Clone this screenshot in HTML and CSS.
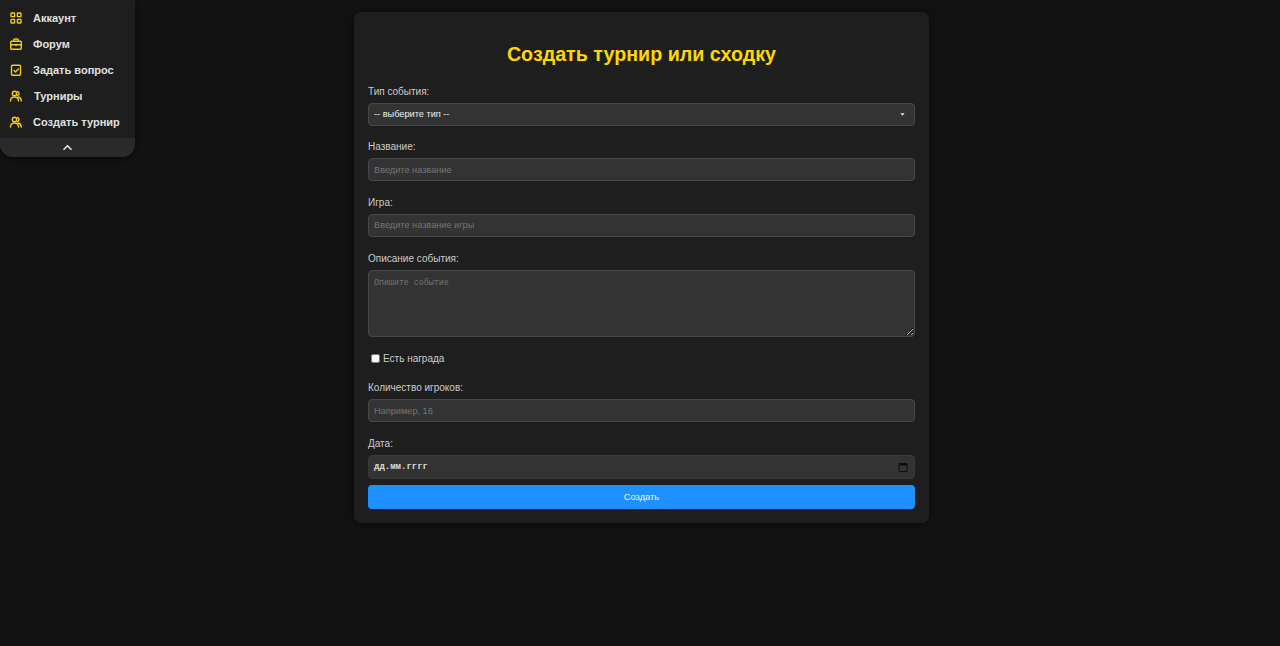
FILE: index.html
```html
<!DOCTYPE html>
<html lang="ru">
<head>
<meta charset="utf-8">
<title>Создать турнир или сходку</title>
<link rel="stylesheet" href="styles.css">
</head>
<body>
<nav class="menu">
  <ul class="menu-list">
    <li class="menu-item"><svg class="menu-icon" viewBox="0 0 14 14"><rect x="2" y="2" width="3.600" height="3.600" rx="0.400"/><rect x="8.400" y="2" width="3.600" height="3.600" rx="0.400"/><rect x="2" y="8.400" width="3.600" height="3.600" rx="0.400"/><rect x="8.400" y="8.400" width="3.600" height="3.600" rx="0.400"/></svg><a>Аккаунт</a></li>
    <li class="menu-item"><svg class="menu-icon" viewBox="0 0 14 14"><rect x="1.700" y="4.200" width="10.600" height="8" rx="1"/><path d="M4.800 4V2.800a.8.8 0 0 1 .8-.8h2.800a.8.8 0 0 1 .8.8V4M1.700 7.800h10.600M7 7.200v1.400"/></svg><a>Форум</a></li>
    <li class="menu-item"><svg class="menu-icon" viewBox="0 0 14 14"><rect x="2.500" y="2.200" width="9" height="10" rx="1"/><path d="M5 7.500l1.500 1.500 2.800-3"/></svg><a>Задать вопрос</a></li>
    <li class="menu-item"><svg class="menu-icon" viewBox="0 0 14 14"><circle cx="5.500" cy="4.500" r="2.200"/><path d="M1.500 12c0-2.500 1.500-4 4-4s4 1.500 4 4M8.500 2.500a2.200 2.200 0 0 1 0 4.200M9.500 8c1.800.5 2.800 2 2.800 4"/></svg><a class="menu-link-shifted">Турниры</a></li>
    <li class="menu-item"><svg class="menu-icon" viewBox="0 0 14 14"><circle cx="5.500" cy="4.500" r="2.200"/><path d="M1.500 12c0-2.500 1.500-4 4-4s4 1.500 4 4M8.500 2.500a2.200 2.200 0 0 1 0 4.200M9.500 8c1.800.5 2.800 2 2.800 4"/></svg><a>Создать турнир</a></li>
  </ul>
  <div class="menu-toggle"><svg class="chevron" viewBox="0 0 12 8"><path d="M2 6l4-4 4 4"/></svg></div>
</nav>

<main class="page">
  <form class="card">
    <h1 class="title">Создать турнир или сходку</h1>
    <div class="field">
      <label class="label">Тип события:</label>
      <div class="select-wrap">
        <select class="control select"><option>-- выберите тип --</option></select>
        <svg class="select-arrow" viewBox="0 0 8 5"><path d="M0.500 0.500h7L4 4.500z"/></svg>
      </div>
    </div>
    <div class="field">
      <label class="label">Название:</label>
      <input class="control" type="text" placeholder="Введите название">
    </div>
    <div class="field">
      <label class="label">Игра:</label>
      <input class="control" type="text" placeholder="Введите название игры">
    </div>
    <div class="field">
      <label class="label">Описание события:</label>
      <textarea class="control textarea" placeholder="Опишите событие"></textarea>
    </div>
    <div class="check-row">
      <input class="check" type="checkbox" id="prize">
      <label class="check-label" for="prize">Есть награда</label>
    </div>
    <div class="field">
      <label class="label">Количество игроков:</label>
      <input class="control" type="text" placeholder="Например, 16">
    </div>
    <div class="field field-date">
      <label class="label">Дата:</label>
      <div class="control date">
        <span class="date-text">дд.мм.гггг</span>
        <svg class="date-icon" viewBox="0 0 10 10"><path class="date-fill" d="M1 1h8v2.500H1z"/><rect class="date-frame" x="1" y="1.500" width="8" height="8" rx="0.500"/></svg>
      </div>
    </div>
    <button class="submit" type="button">Создать</button>
  </form>
</main>
</body>
</html>
```
FILE: styles.css
```css
* { box-sizing: border-box; }

html, body { height: 100%; }

body {
  margin: 0;
  background: #121212;
  font-family: "Liberation Sans", Arial, sans-serif;
  color: #ddd;
  overflow: hidden;
}

.menu {
  position: absolute;
  top: 0;
  left: 0;
  width: 135px;
  height: 157px;
  background: #1e1e1e;
  border-radius: 0 0 13px 13px;
  box-shadow: 0 2px 6px rgba(0, 0, 0, .5);
  display: flex;
  flex-direction: column;
  overflow: hidden;
}

.menu-list {
  list-style: none;
  margin: 0;
  padding: 5px 0 0 9px;
  flex: 1;
}

.menu-item {
  display: flex;
  align-items: center;
  gap: 10px;
  height: 26px;
  font-size: 11px;
  font-weight: 700;
  color: #e0e0e0;
}

.menu-link-shifted { margin-left: 1px; }

.menu-icon {
  width: 14px;
  height: 14px;
  fill: none;
  stroke: #f0cc14;
  stroke-width: 1.400;
  stroke-linecap: round;
  stroke-linejoin: round;
}

.menu-toggle {
  height: 19px;
  background: #2a2a2a;
  display: flex;
  align-items: center;
  justify-content: center;
}

.chevron {
  width: 11px;
  height: 7px;
  fill: none;
  stroke: #e0e0e0;
  stroke-width: 2;
  stroke-linecap: round;
  stroke-linejoin: round;
}

.page {
  display: flex;
  justify-content: center;
  padding: 12px 0 0 3px;
}

.card {
  width: 575px;
  height: 511px;
  padding: 29px 14px 0;
  background: #1e1e1e;
  border-radius: 7px;
  box-shadow: 0 0 8px rgba(0, 0, 0, .5);
}

.title {
  margin: 0 0 16.800px;
  text-align: center;
  font-size: 19.700px;
  line-height: 27px;
  font-weight: 700;
  color: #ffd700;
}

.field { margin-bottom: 14.600px; }

.field-date { margin-bottom: 6px; }

.label {
  display: block;
  padding-top: 1px;
  margin-bottom: 5px;
  font-size: 10px;
  line-height: 12px;
  color: #ccc;
}

.control {
  display: block;
  width: 100%;
  height: 23px;
  padding: 0 5px;
  background: #333;
  border: 1px solid #484848;
  border-radius: 4px;
  color: #eee;
  font-family: "Liberation Sans", Arial, sans-serif;
  font-size: 9.200px;
  outline: none;
}

.control::placeholder { color: #757575; opacity: 1; }

.select-wrap { position: relative; }

.select { appearance: none; }

.select-arrow {
  position: absolute;
  top: 10px;
  right: 10px;
  width: 5px;
  height: 3px;
  fill: #eee;
}

.textarea {
  height: 67px;
  padding: 7px 5px 5px;
  font-family: "Liberation Mono", monospace;
  font-size: 8.300px;
  resize: vertical;
}

.check-row {
  display: flex;
  align-items: center;
  height: 14px;
  margin: 0 0 16px 3px;
  gap: 3px;
}

.check {
  width: 9px;
  height: 9px;
  margin: 0;
}

.check-label {
  font-size: 10px;
  color: #ccc;
}

.date {
  height: 24px;
  border-color: #383838;
  display: flex;
  align-items: center;
  justify-content: space-between;
}

.date-text {
  font-family: "Liberation Mono", monospace;
  font-size: 9px;
  font-weight: 700;
  color: #ddd;
}

.date-icon {
  width: 10px;
  height: 10px;
  margin-right: 1px;
}

.date-fill { fill: #0c0c0c; }

.date-frame {
  fill: none;
  stroke: #0c0c0c;
  stroke-width: 1;
}

.submit {
  display: block;
  width: 100%;
  height: 24px;
  padding: 0;
  background: #1e90ff;
  border: 0;
  border-radius: 4px;
  color: #f4f4f4;
  font-family: "Liberation Sans", Arial, sans-serif;
  font-size: 9.300px;
  font-weight: 400;
}
```
